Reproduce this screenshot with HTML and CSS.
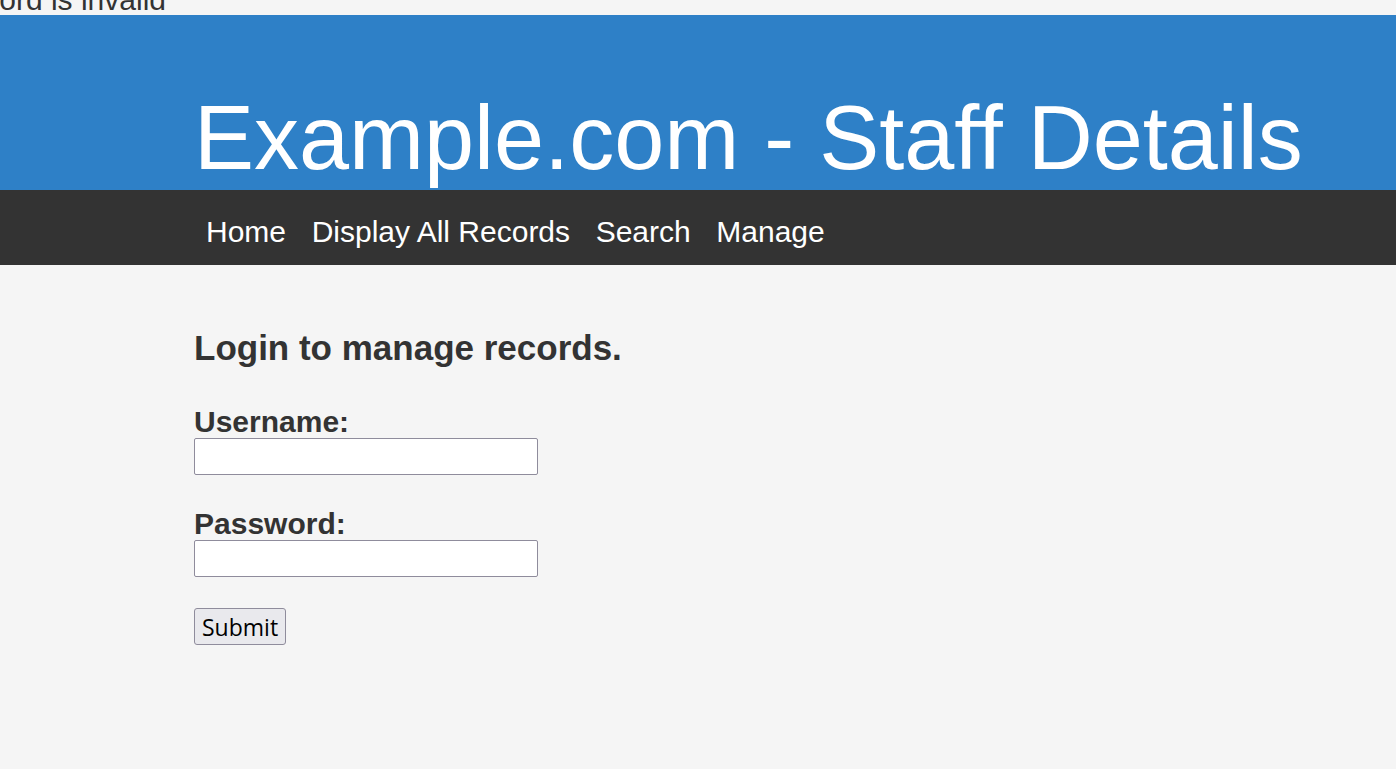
FILE: index.html
```html
<!DOCTYPE html>
<html>
<head>
<meta charset="utf-8">
<title>Example.com - Staff Details</title>
<link rel="stylesheet" href="styles.css">
</head>
<body>
<div class="error"><span>Username or Password is invalid</span></div>
<header class="banner">
  <div class="container">
    <h1 class="title">Example.com - Staff Details</h1>
  </div>
</header>
<nav class="nav">
  <div class="container nav-inner">
    <a href="#" class="nav-link">Home</a>
    <a href="#" class="nav-link">Display All Records</a>
    <a href="#" class="nav-link">Search</a>
    <a href="#" class="nav-link">Manage</a>
  </div>
</nav>
<main class="container content">
  <h2 class="heading">Login to manage records.</h2>
  <form class="login">
    <div class="field">
      <label class="label" for="u">Username:</label>
      <input class="input" id="u" type="text">
    </div>
    <div class="field field-last">
      <label class="label" for="p">Password:</label>
      <input class="input" id="p" type="password">
    </div>
    <button class="submit" type="button">Submit</button>
  </form>
</main>
</body>
</html>
```
FILE: styles.css
```css
html, body {
  margin: 0;
  padding: 0;
  background: #f5f5f5;
  font-family: "Liberation Sans", Arial, sans-serif;
  color: #333;
}
.error {
  height: 15px;
  width: 166px;
  display: flex;
  justify-content: flex-end;
  align-items: flex-end;
  overflow: visible;
  font-size: 30px;
  line-height: 30px;
  white-space: nowrap;
  color: #333;
}
.error span {
  flex: none;
}
.container {
  width: 1008px;
  margin: 0 auto;
}
.banner {
  background: #2e80c7;
  height: 175px;
  display: flex;
  align-items: flex-end;
}
.title {
  margin: 0;
  color: #fff;
  font-weight: normal;
  font-size: 90px;
  line-height: 104px;
  white-space: nowrap;
}
.nav {
  background: #333;
  height: 75px;
  display: flex;
  align-items: center;
}
.nav-inner {
  display: flex;
  gap: 1.6px;
}
.nav-link {
  color: #fff;
  text-decoration: none;
  font-size: 30px;
  padding: 0 12px;
  line-height: 34px;
  position: relative;
  top: 4px;
}
.content {
  padding-top: 62px;
}
.heading {
  margin: 0 0 36px;
  font-size: 35px;
  line-height: 42px;
  font-weight: bold;
}
.field {
  margin-bottom: 32px;
}
.field-last {
  margin-bottom: 31px;
}
.label {
  display: block;
  font-size: 30px;
  font-weight: bold;
  line-height: 32px;
  padding-top: 1px;
}
.input {
  display: block;
  box-sizing: border-box;
  width: 344px;
  height: 37px;
  margin: 0;
  border: 1px solid #8f8c9c;
  border-radius: 2px;
  background: #fff;
  font-size: 24px;
}
.submit {
  box-sizing: border-box;
  height: 37px;
  padding: 0 7px;
  margin: 0;
  font-family: "Open Sans", "Noto Sans", sans-serif;
  font-size: 23px;
  line-height: 30px;
  color: #000;
  background: #e9e9ed;
  border: 1px solid #8f8c9c;
  border-radius: 3px;
}
```
